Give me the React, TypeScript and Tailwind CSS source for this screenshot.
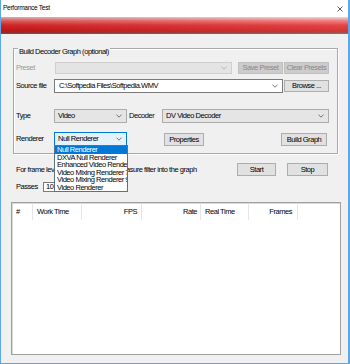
import React from "react";

function Chevron({ color = "#5a5a5a" }: { color?: string }) {
  return (
    <svg width="6" height="4" viewBox="0 0 6 4" className="shrink-0">
      <polyline points="0.5,0.6 3,3.2 5.5,0.6" fill="none" stroke={color} strokeWidth="0.8" />
    </svg>
  );
}

function Combo({ text, className, chevron }: { text?: string; className: string; chevron?: string }) {
  return (
    <div className={`flex items-center justify-between pl-[3px] pr-[4px] border whitespace-nowrap ${className}`}>
      <span>{text}</span>
      <Chevron color={chevron} />
    </div>
  );
}

function Btn({ label, className, disabled }: { label: string; className: string; disabled?: boolean }) {
  return (
    <div
      className={`flex items-center justify-center border whitespace-nowrap ${
        disabled ? "bg-[#cccccc] border-[#bfbfbf] text-[#8a8a8a]" : "bg-[#e1e1e1] border-[#adadad]"
      } ${className}`}
    >
      {label}
    </div>
  );
}

const renderers = [
  "Null Renderer",
  "DXVA Null Renderer",
  "Enhanced Video Renderer",
  "Video Mixing Renderer 7",
  "Video Mixing Renderer 9",
  "Video Renderer",
];

const columns = [
  { label: "#", w: "w-[21px]", align: "pl-[4px]" },
  { label: "Work Time", w: "w-[49px]", align: "pl-[4px]" },
  { label: "FPS", w: "w-[60px]", align: "justify-end pr-[4px]" },
  { label: "Rate", w: "w-[59px]", align: "justify-end pr-[3px]" },
  { label: "Real Time", w: "w-[48px]", align: "pl-[4px]" },
  { label: "Frames", w: "w-[49px]", align: "justify-end pr-[5px]" },
];

export default function App() {
  return (
    <div className="w-[350px] h-[364px] flex flex-col bg-[#f0f0f0] border-l border-r-2 border-b border-[#5ea7e6] font-['Liberation_Sans',Arial,sans-serif] text-[7.5px] tracking-[-0.45px] leading-none text-black overflow-hidden">
      {/* title bar */}
      <div className="h-[17px] shrink-0 bg-white flex items-center justify-between pl-[2px] pr-[5px]">
        <span className="text-[6.6px] tracking-[-0.3px]">Performance Test</span>
        <svg width="6" height="6" viewBox="0 0 6 6">
          <path d="M0.5 0.5 L5.5 5.5 M5.5 0.5 L0.5 5.5" stroke="#333" strokeWidth="0.8" />
        </svg>
      </div>
      <div className="h-[17px] shrink-0 bg-[linear-gradient(to_right,rgba(110,0,0,0.18),rgba(255,255,255,0.12)),linear-gradient(to_bottom,#f4d2d2_0%,#ee7070_22%,#e32a2a_50%,#cc1c1c_80%,#8a3c3c_94%,#6d6d6d_100%)]" />

      {/* group box */}
      <div className="relative ml-[12px] mt-[14px] w-[325px] h-[106px] shrink-0 border border-[#a9a9a9] shadow-[inset_1px_1px_0_#ffffff,1px_1px_0_#ffffff] pl-[2px] pt-[13px]">
        <span className="absolute left-[4px] top-[-2px] bg-[#f0f0f0] px-[1px] leading-[9px]">
          Build Decoder Graph (optional)
        </span>

        <div className="flex items-center h-[12px]">
          <span className="w-[39px] text-[#9a9a9a]">Preset</span>
          <Combo className="w-[177px] h-[12px] bg-[#e4e4e4] border-[#cfcfcf]" chevron="#b0b0b0" />
          <Btn label="Save Preset" disabled className="ml-[6px] w-[45px] h-[12px]" />
          <Btn label="Clear Presets" disabled className="ml-[1px] w-[45px] h-[12px]" />
        </div>

        <div className="flex items-center h-[14px] mt-[5px]">
          <span className="w-[38px]">Source file</span>
          <Combo
            text="C:\Softpedia Files\Softpedia.WMV"
            className="w-[229px] h-[14px] bg-white border-[#7a7a7a] pl-[4px]"
          />
          <Btn label="Browse ..." className="ml-[1px] w-[45px] h-[12px]" />
        </div>

        <div className="flex items-center h-[14px] mt-[16px]">
          <span className="w-[38px]">Type</span>
          <Combo text="Video" className="w-[73px] h-[14px] bg-[#e5e5e5] border-[#acacac]" />
          <span className="ml-[2px] w-[33px]">Decoder</span>
          <Combo text="DV Video Decoder" className="w-[167px] h-[14px] bg-[#e5e5e5] border-[#acacac]" />
        </div>

        <div className="flex items-center h-[14px] mt-[9px]">
          <span className="w-[38px]">Renderer</span>
          <div className="relative">
            <Combo text="Null Renderer" className="w-[73px] h-[14px] bg-[#e5f1fb] border-[#0078d7]" />
            <div className="absolute left-0 top-[13px] z-10 w-[74px] h-[47px] bg-white border border-[#5f6f86] overflow-hidden">
              {renderers.map((r, i) => (
                <div
                  key={r}
                  className={`h-[7.5px] leading-[7.5px] pl-[2px] whitespace-nowrap ${
                    i === 0 ? "bg-[#0078d7] text-white" : ""
                  }`}
                >
                  {r}
                </div>
              ))}
            </div>
          </div>
          <Btn label="Properties" className="ml-[37px] w-[40px] h-[13px] mt-[1px]" />
          <Btn label="Build Graph" className="ml-[77px] w-[46px] h-[13px] mt-[1px]" />
        </div>
      </div>

      {/* actions */}
      <div className="flex items-center h-[13px] mt-[9px] shrink-0">
        <span className="ml-[15px] w-[221px] whitespace-nowrap">
          For frame level statistics, insert the Measure filter into the graph
        </span>
        <Btn label="Start" className="w-[39px] h-[13px]" />
        <Btn label="Stop" className="ml-[11px] w-[41px] h-[13px]" />
      </div>

      <div className="flex items-center h-[10px] mt-[6px] shrink-0">
        <span className="ml-[15px] w-[27px]">Passes</span>
        <div className="w-[40px] h-[10px] bg-white border border-[#7a7a7a] flex items-center pl-[2px]">10</div>
      </div>

      {/* results list */}
      <div className="ml-[10px] mt-[10px] w-[330px] h-[153px] shrink-0 bg-white border border-[#a0a0a0] shadow-[inset_1px_1px_0_#d8d8d8]">
        <div className="flex h-[17px]">
          {columns.map((c) => (
            <div key={c.label} className={`${c.w} flex items-center border-r border-[#e5e5e5] ${c.align}`}>
              {c.label}
            </div>
          ))}
        </div>
      </div>
    </div>
  );
}
